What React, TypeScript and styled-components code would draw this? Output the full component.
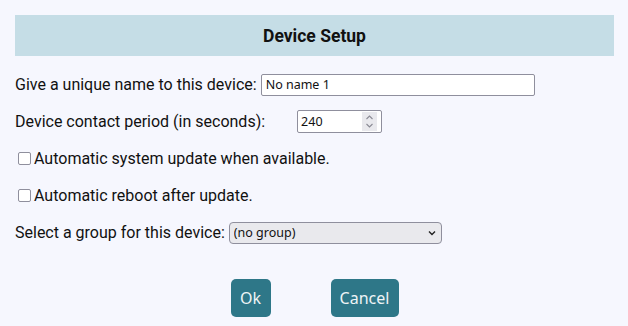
import styled, {createGlobalStyle} from "styled-components";

const GlobalStyle = createGlobalStyle`
  html, body {
    margin: 0;
    padding: 0;
    background: #f6f7fe;
  }
`;

const Page = styled.div`
  padding: 15px 14px 0 15px;
  font-family: Roboto, "Liberation Sans", sans-serif;
  color: #111;
`;

const Header = styled.div`
  height: 41px;
  background: #c5dde6;
  display: flex;
  align-items: center;
  justify-content: center;
  font-weight: bold;
  font-size: 17.5px;
`;

const Form = styled.div`
  margin-top: 10px;
  display: flex;
  flex-direction: column;
`;

const Row = styled.label<{gap?: number}>`
  height: 37px;
  display: flex;
  align-items: center;
  gap: ${({gap = 0}) => gap}px;
  font-size: 16px;
`;

const TextInput = styled.input`
  box-sizing: border-box;
  width: 274px;
  height: 22px;
  margin-left: 4px;
  border: 1px solid #8f8f9d;
  border-radius: 2px;
  background: #fff;
  padding: 0 4px;
  font-family: "Noto Sans", sans-serif;
  font-size: 12.5px;
  color: #111;
  outline: none;
`;

const NumberBox = styled.div`
  box-sizing: border-box;
  width: 85px;
  height: 23px;
  border: 1px solid #8f8f9d;
  border-radius: 2px;
  background: #fff;
  display: flex;
  align-items: center;
  padding: 0 4px 0 3px;
`;

const NumberInput = styled.input`
  flex: 1;
  min-width: 0;
  border: none;
  outline: none;
  background: transparent;
  padding: 0;
  font-family: "Noto Sans", sans-serif;
  font-size: 12.5px;
  color: #111;
`;

const Spinner = styled.div`
  width: 15px;
  height: 19px;
  background: #e9e9ed;
  display: flex;
  align-items: center;
  justify-content: center;
`;

const Check = styled.input`
  appearance: none;
  box-sizing: border-box;
  width: 13px;
  height: 13px;
  margin: 0 3px 0 3px;
  border: 1px solid #8f8f9d;
  border-radius: 2px;
  background: #fff;
`;

const SelectWrap = styled.div`
  position: relative;
  margin-left: 4px;
`;

const Select = styled.select`
  appearance: none;
  box-sizing: border-box;
  width: 213px;
  height: 22px;
  border: 1px solid #8f8f9d;
  border-radius: 4px;
  background: #e9e9ed;
  padding: 0 20px 0 4px;
  font-family: "Noto Sans", sans-serif;
  font-size: 12.5px;
  color: #111;
  outline: none;
`;

const Chevron = styled.svg`
  position: absolute;
  right: 6px;
  top: 8px;
  pointer-events: none;
`;

const Buttons = styled.div`
  margin-top: 28px;
  display: flex;
  justify-content: center;
  gap: 60px;
`;

const Button = styled.button<{width: number}>`
  width: ${({width}) => width}px;
  height: 38px;
  border: none;
  border-radius: 5px;
  background: #2e7788;
  color: #eef4f6;
  font-family: "Noto Sans", "Open Sans", sans-serif;
  font-size: 16px;
  padding: 0;
`;

export default function App() {
  return (
    <>
      <GlobalStyle />
      <Page>
        <Header>Device Setup</Header>
        <Form>
          <Row>
            Give a unique name to this device:
            <TextInput type="text" defaultValue="No name 1" />
          </Row>
          <Row gap={32}>
            Device contact period (in seconds):
            <NumberBox>
              <NumberInput type="text" defaultValue="240" />
              <Spinner>
                <svg width="9" height="15" viewBox="0 0 9 15" fill="none" stroke="#8a8a94" strokeWidth="1.1">
                  <path d="M1.5 5 L4.5 2 L7.5 5" />
                  <path d="M1.5 10 L4.5 13 L7.5 10" />
                </svg>
              </Spinner>
            </NumberBox>
          </Row>
          <Row>
            <Check type="checkbox" />
            Automatic system update when available.
          </Row>
          <Row>
            <Check type="checkbox" />
            Automatic reboot after update.
          </Row>
          <Row>
            Select a group for this device:
            <SelectWrap>
              <Select defaultValue="none">
                <option value="none">(no group)</option>
              </Select>
              <Chevron width="8" height="6" viewBox="0 0 8 6" fill="none" stroke="#222" strokeWidth="1.4">
                <path d="M1 1.5 L4 4.5 L7 1.5" />
              </Chevron>
            </SelectWrap>
          </Row>
        </Form>
        <Buttons>
          <Button width={40}>Ok</Button>
          <Button width={68}>Cancel</Button>
        </Buttons>
      </Page>
    </>
  );
}
